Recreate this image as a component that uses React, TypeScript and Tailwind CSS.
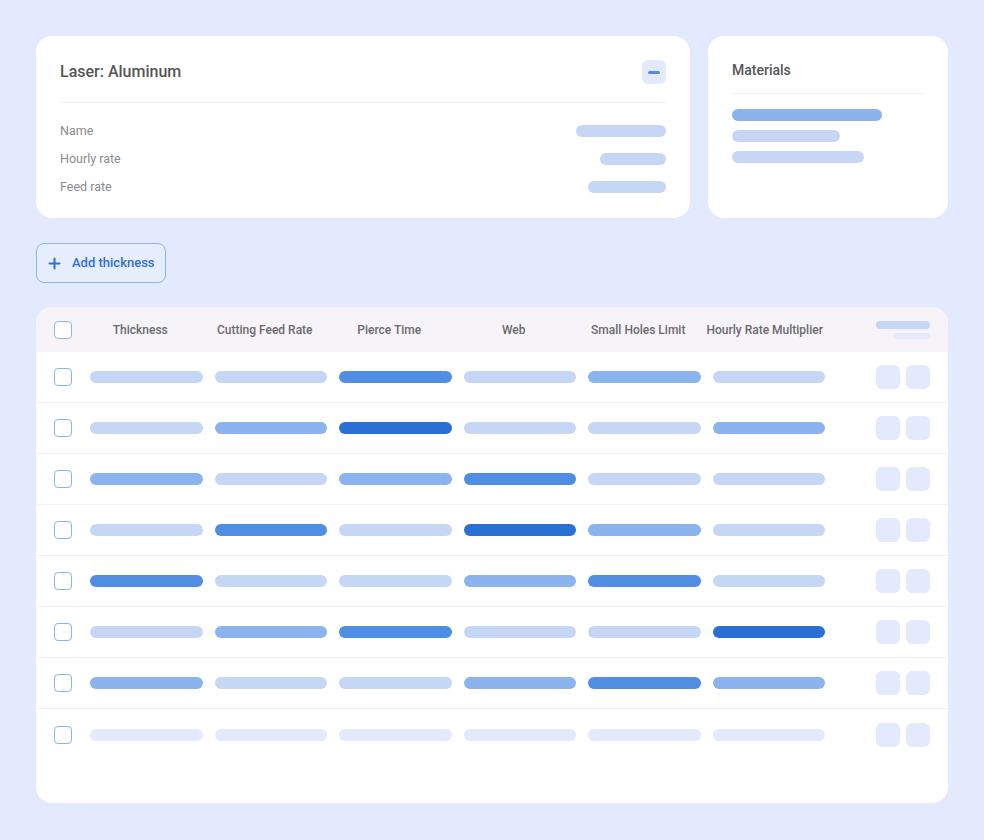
import React from "react";

type C = "L" | "M" | "D" | "X" | "F";

const colorClass: Record<C, string> = {
  L: "bg-[#c5d7f5]",
  M: "bg-[#8bb3ee]",
  D: "bg-[#4f8ee2]",
  X: "bg-[#2a6fd3]",
  F: "bg-[#e3eafd]",
};

const rows: C[][] = [
  ["L", "L", "D", "L", "M", "L"],
  ["L", "M", "X", "L", "L", "M"],
  ["M", "L", "M", "D", "L", "L"],
  ["L", "D", "L", "X", "M", "L"],
  ["D", "L", "L", "M", "D", "L"],
  ["L", "M", "D", "L", "L", "X"],
  ["M", "L", "L", "M", "D", "M"],
  ["F", "F", "F", "F", "F", "F"],
];

const headers = [
  "Thickness",
  "Cutting Feed Rate",
  "Pierce Time",
  "Web",
  "Small Holes Limit",
  "Hourly Rate Multiplier",
];

function Checkbox() {
  return (
    <div className="w-[18px] h-[18px] shrink-0 rounded-[4px] border-[1.5px] border-[#8bb3ee] bg-white" />
  );
}

export default function App() {
  return (
    <div className="min-h-screen h-[840px] bg-[#e3eafd] p-9 font-['Roboto','Liberation_Sans',sans-serif]">
      <div className="flex gap-[18px]">
        <div className="flex-1 h-[182px] rounded-2xl bg-white p-6">
          <div className="flex h-6 items-center justify-between">
            <h2 className="text-[16px] font-medium text-[#555558]">Laser: Aluminum</h2>
            <button className="flex h-6 w-6 items-center justify-center rounded-md bg-[#e3eafd]">
              <span className="block h-[3px] w-3 rounded-full bg-[#4f8ee2]" />
            </button>
          </div>
          <div className="mt-[18px] h-px bg-[#f1f1f4]" />
          <div className="mt-[14px]">
            <div className="flex h-7 items-center justify-between">
              <span className="text-[12.5px] text-[#8a8a8e]">Name</span>
              <span className="h-3 w-[90px] rounded-full bg-[#c5d7f5]" />
            </div>
            <div className="flex h-7 items-center justify-between">
              <span className="text-[12.5px] text-[#8a8a8e]">Hourly rate</span>
              <span className="h-3 w-[66px] rounded-full bg-[#c5d7f5]" />
            </div>
            <div className="flex h-7 items-center justify-between">
              <span className="text-[12.5px] text-[#8a8a8e]">Feed rate</span>
              <span className="h-3 w-[78px] rounded-full bg-[#c5d7f5]" />
            </div>
          </div>
        </div>
        <div className="w-[240px] h-[182px] rounded-2xl bg-white p-6">
          <h2 className="text-[14px] leading-5 font-medium text-[#555558]">Materials</h2>
          <div className="mt-[13px] h-px bg-[#f1f1f4]" />
          <div className="mt-[15px] flex flex-col gap-[9px]">
            <span className="h-3 w-[150px] rounded-full bg-[#8bb3ee]" />
            <span className="h-3 w-[108px] rounded-full bg-[#c5d7f5]" />
            <span className="h-3 w-[132px] rounded-full bg-[#c5d7f5]" />
          </div>
        </div>
      </div>

      <button className="mt-[25px] flex h-10 w-[130px] items-center gap-[11px] rounded-lg border border-[#8bb3ee] bg-[#e6edfd] pl-[11px]">
        <svg width="13" height="13" viewBox="0 0 13 13" className="shrink-0">
          <path d="M6.5 1.5v10M1.5 6.5h10" stroke="#2f6fd6" strokeWidth="2" strokeLinecap="round" />
        </svg>
        <span className="text-[13px] font-medium text-[#2f6fd6]">Add thickness</span>
      </button>

      <div className="mt-6 overflow-hidden rounded-2xl bg-white pb-[43px]">
        <div className="flex h-[45px] items-center bg-[#f6f4f8] px-[18px]">
          <Checkbox />
          <div className="ml-3 flex">
            {headers.map((h) => (
              <div key={h} className="w-[124.5px] pr-3 text-center text-[12px] font-medium text-[#6a6a6e] whitespace-nowrap">
                {h}
              </div>
            ))}
          </div>
          <div className="flex flex-1 flex-col items-end gap-1">
            <span className="h-2 w-[54px] rounded-full bg-[#c5d7f5]" />
            <span className="h-1.5 w-9 rounded-full bg-[#e3eafd]" />
          </div>
        </div>
        {rows.map((r, i) => (
          <div
            key={i}
            className={`flex h-[51px] items-center px-[18px] ${i < rows.length - 1 ? "border-b border-[#f1f1f4]" : ""}`}
          >
            <Checkbox />
            <div className="ml-3 flex">
              {r.map((c, j) => (
                <div key={j} className="w-[124.5px] px-1.5">
                  <div className={`h-3 rounded-full ${colorClass[c]}`} />
                </div>
              ))}
            </div>
            <div className="flex flex-1 justify-end gap-1.5">
              <span className="h-6 w-6 rounded-md bg-[#e3eafd]" />
              <span className="h-6 w-6 rounded-md bg-[#e3eafd]" />
            </div>
          </div>
        ))}
      </div>
    </div>
  );
}
